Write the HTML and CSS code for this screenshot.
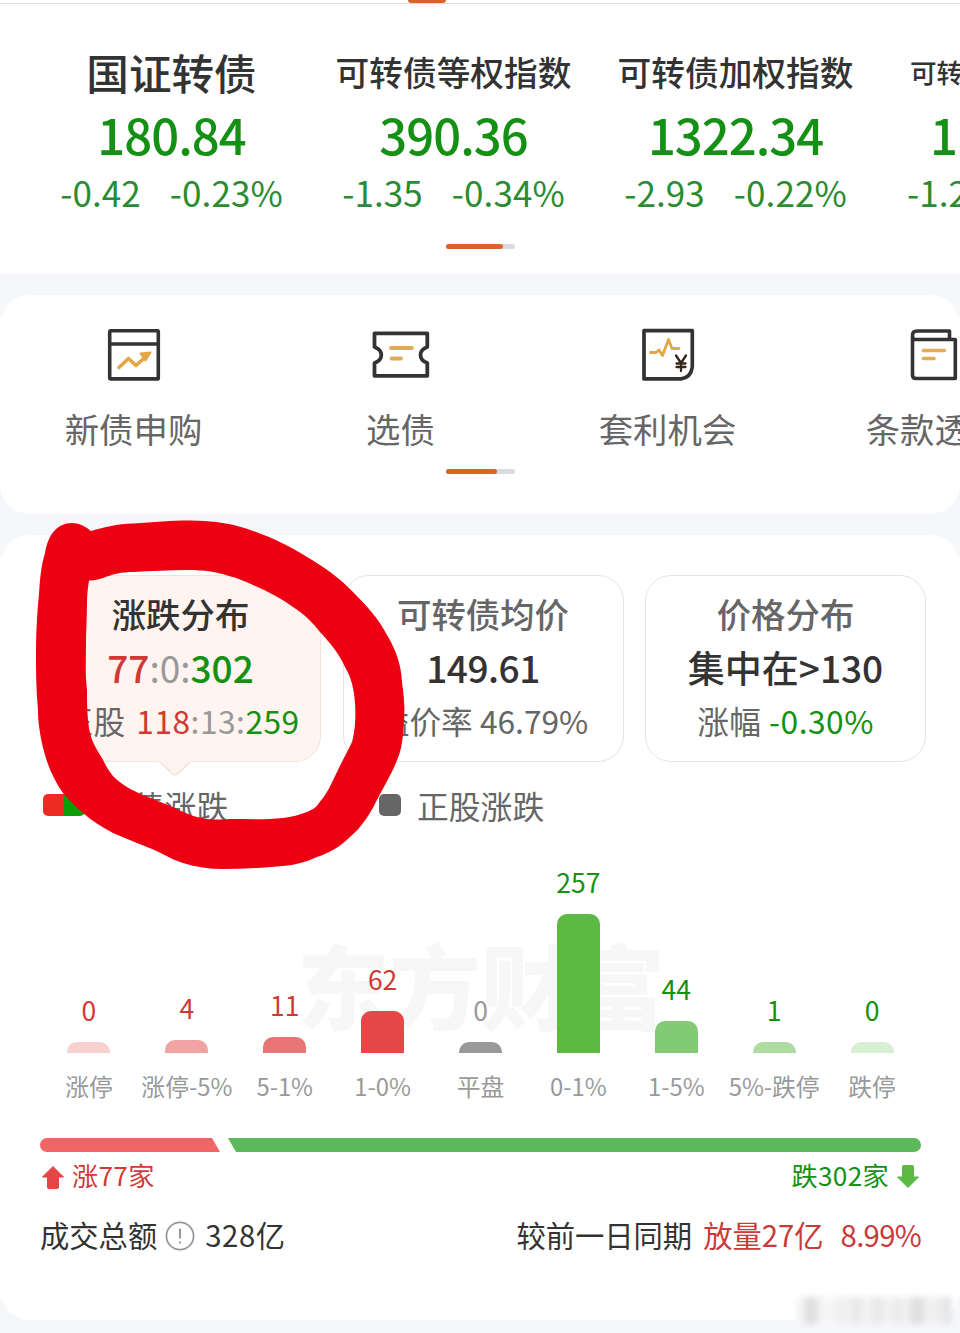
FILE: index.html
```html
<!DOCTYPE html>
<html lang="zh-CN">
<head>
<meta charset="utf-8">
<title>可转债</title>
<link rel="stylesheet" href="styles.css">
</head>
<body>
<div class="screen">
  <section class="indices">
    <div class="tab-line"><span class="tab-mark"></span></div>
    <div class="index-row">
      <div class="index"><h2 class="name name-lg">国证转债</h2><p class="value">180.84</p><p class="change"><span>-0.42</span><span>-0.23%</span></p></div>
      <div class="index"><h2 class="name">可转债等权指数</h2><p class="value">390.36</p><p class="change"><span>-1.35</span><span>-0.34%</span></p></div>
      <div class="index"><h2 class="name">可转债加权指数</h2><p class="value">1322.34</p><p class="change"><span>-2.93</span><span>-0.22%</span></p></div>
      <div class="index index-cut"><h2 class="name name-sm">可转债</h2><p class="value">1</p><p class="change"><span>-1.2</span></p></div>
    </div>
    <div class="pager"><span class="pager-on pager-a"></span></div>
  </section>

  <section class="card tools">
    <div class="tool-row">
      <div class="tool">
        <svg class="icon" viewBox="0 0 60 60" fill="none" stroke-linejoin="round" stroke-linecap="round"><g stroke="#333" stroke-width="3.6"><rect x="5.7" y="5.7" width="48.6" height="48.2" rx="1"/><path d="M6 19H54"/></g><path d="M15 42.500L24.500 33.500L32 40.500L43 30.500" stroke="#e3a545" stroke-width="3.6"/><path d="M36.500 28.500L46.500 27.500L41.500 35.500Z" fill="#e3a545" stroke="#e3a545" stroke-width="2"/></svg>
        <span class="tool-name">新债申购</span>
      </div>
      <div class="tool">
        <svg class="icon" viewBox="0 0 60 60" fill="none" stroke-linejoin="round" stroke-linecap="round"><path d="M3.500 8.300H56.300V22Q49.500 24.500 49.500 30T56.300 38V50.800H3.500V38Q10.300 35.500 10.300 30T3.500 22Z" stroke="#333" stroke-width="3.800"/><path d="M20 23H41M20.500 33.500H30" stroke="#e0ac55" stroke-width="3.800"/></svg>
        <span class="tool-name">选债</span>
      </div>
      <div class="tool">
        <svg class="icon" viewBox="0 0 60 60" fill="none" stroke-linejoin="round" stroke-linecap="round"><path d="M6 5.700H54.300V42Q53 52.500 43 53.900H6Z" stroke="#333" stroke-width="3.700"/><path d="M12.500 27.500H18L21 25L24.500 30.500L30.500 14.500L34 23.500H41" stroke="#e3a545" stroke-width="2.800"/><path d="M38 30.500L43 38L48 30.500M43 38V46M38.500 38.500H47.500M38.500 42H47.500" stroke="#33261a" stroke-width="2.300"/></svg>
        <span class="tool-name">套利机会</span>
      </div>
      <div class="tool">
        <svg class="icon" viewBox="0 0 60 60" fill="none" stroke-linejoin="round" stroke-linecap="round"><path d="M7.500 10.500Q7.500 6 12 6H44.500V14M10.500 14.500H50.300V53.500H11Q7.500 53.500 7.500 50V10.500Q7.500 14.500 10.500 14.500" stroke="#333" stroke-width="3.600"/><path d="M18.500 25.500H39.500M18.500 33.500H29" stroke="#e0ac55" stroke-width="3.600"/></svg>
        <span class="tool-name">条款透视</span>
      </div>
    </div>
    <div class="pager"><span class="pager-on pager-b"></span></div>
  </section>

  <section class="card stats">
    <div class="panels">
      <div class="panel active">
        <h3 class="panel-title">涨跌分布</h3>
        <p class="panel-value"><span class="up">77</span><span class="flat">:0:</span><span class="down">302</span></p>
        <p class="panel-note wide">正股 <span class="up">118</span><span class="flat">:13:</span><span class="down">259</span></p>
        <svg class="pointer" viewBox="0 0 38 18"><path d="M2 0L16 13.500Q19 16 22 13.500L36 0" fill="#fff4ef" stroke="#f5e2da" stroke-width="1.500"/><path d="M0 0H38" stroke="#fff4ef" stroke-width="3"/></svg>
      </div>
      <div class="panel">
        <h3 class="panel-title">可转债均价</h3>
        <p class="panel-value tight">149.61</p>
        <p class="panel-note">溢价率 46.79%</p>
      </div>
      <div class="panel">
        <h3 class="panel-title">价格分布</h3>
        <p class="panel-value">集中在&gt;130</p>
        <p class="panel-note wide">涨幅 <span class="down">-0.30%</span></p>
      </div>
    </div>

    <div class="legend">
      <div class="legend-item"><i class="swatch duo"></i>转债涨跌</div>
      <div class="legend-item"><i class="swatch"></i>正股涨跌</div>
    </div>

    <div class="chart">
      <div class="brand">东方财富</div>
      <div class="col up"><b>0</b><i class="bar r1" style="height:11px"></i><span>涨停</span></div>
      <div class="col up"><b>4</b><i class="bar r2" style="height:13px"></i><span>涨停-5%</span></div>
      <div class="col up"><b>11</b><i class="bar r3" style="height:16px"></i><span>5-1%</span></div>
      <div class="col up"><b>62</b><i class="bar r4" style="height:42px"></i><span>1-0%</span></div>
      <div class="col flat"><b>0</b><i class="bar n0" style="height:11px"></i><span>平盘</span></div>
      <div class="col down"><b>257</b><i class="bar g4" style="height:139px"></i><span>0-1%</span></div>
      <div class="col down"><b>44</b><i class="bar g3" style="height:32px"></i><span>1-5%</span></div>
      <div class="col down"><b>1</b><i class="bar g2" style="height:11px"></i><span>5%-跌停</span></div>
      <div class="col down"><b>0</b><i class="bar g1" style="height:11px"></i><span>跌停</span></div>
    </div>

    <div class="ratio"><i class="ratio-up"></i><i class="ratio-down"></i></div>
    <div class="counts">
      <span class="count up"><svg class="arrow" viewBox="0 0 24 24"><path d="M12 1.500L22.500 12H17.500V22.500Q17.500 23.500 16.500 23.500H7.500Q6.500 23.500 6.500 22.500V12H1.500Z" fill="#e64545" stroke="#e64545" stroke-linejoin="round"/></svg>涨77家</span>
      <span class="count down">跌302家<svg class="arrow" viewBox="0 0 24 24"><path d="M12 22.500L22.500 12H17.500V1.500Q17.500 .5 16.500 .5H7.500Q6.500 .5 6.500 1.500V12H1.500Z" fill="#5bb944" stroke="#5bb944" stroke-linejoin="round"/></svg></span>
    </div>
    <div class="turnover">
      <span class="total">成交总额<svg class="info" viewBox="0 0 30 30"><circle cx="15" cy="15" r="13.600" fill="none" stroke="#999" stroke-width="1.800"/><path d="M15 7.500V17.500M15 20.500V22.500" stroke="#999" stroke-width="2"/></svg><span class="sum">328亿</span></span>
      <span class="compare">较前一日同期<em>放量27亿</em><em class="pct">8.99%</em></span>
    </div>
  </section>

  <svg class="marker" viewBox="0 0 420 360"><path fill="#ee0013" fill-rule="evenodd" d="M45 43C48 25 57 13 72 13C80 13 86 17 91 21C105 17 117 14 133 13.500C155 12 170 10.500 190 10.500C215 10.500 235 14 253 21C273 28 291 37 307 47C324 57 340 68 353 82C367 96 378 108 387 125C396 140 401 154 402 172C404 186 405 198 404 212C403 222 403 234 399 245C393 262 385 274 377 290C370 304 362 317 350 327C340 337 329 343 317 347C306 352 295 355 283 356C262 358 243 359 223 359C209 359 196 357 183 353C170 349 159 341 147 337C135 332 124 328 113 323C102 317 92 311 83 303C75 296 69 290 63 283C53 269 46 252 42 233C39 218 38 210 38 200C36 180 36 162 36 143C36 122 37 104 39 84C40 69 41 56 45 43ZM89 70.500C95 71 99 69 103 68C113 64 122 62 133 62C152 61 169 60 187 60C205 60 217 62 229 66C238 68 246 72 253 75C267 81 281 88 293 97C304 104 313 113 320 122C330 133 339 143 345 157C352 169 354 180 355 193C356 207 355 222 352 232C347 243 341 253 336 264C331 275 326 285 319 293C315 299 311 300 307 302C299 305 292 307 283 308C265 310 248 309 230 309C218 310 207 310 197 307C185 304 175 297 163 293C156 290 150 288 143 285C131 280 121 274 113 266C108 260 105 254 102 248C97 240 92 232 90 223C87 208 87 194 87 180C85 164 86 149 86 133C86 119 87 106 87 93C87 84 88 77 89 70.500Z"/></svg>
  <div class="smudge"></div>
</div>
</body>
</html>
```
FILE: styles.css
```css
* { box-sizing: border-box; }
body {
  margin: 0;
  background: #f6f7fb;
  font-family: "Noto Sans CJK SC", "Noto Sans", sans-serif;
  color: #333;
}
h2, h3, p { margin: 0; font-weight: 400; }
i, em, b { font-style: normal; font-weight: 400; }
.up { color: #d03a35; }
.down { color: #149114; }
.flat { color: #999; }

.screen {
  position: relative;
  width: 960px;
  height: 1333px;
  overflow: hidden;
  display: flex;
  flex-direction: column;
  gap: 21px;
}

/* index strip */
.indices { height: 274px; background: #fff; overflow: hidden; }
.tab-line { height: 4px; border-bottom: 1px solid #ddd; padding-left: 408px; }
.tab-mark { display: block; width: 38px; height: 3px; background: #d8642a; border-radius: 0 0 3px 3px; }
.index-row { display: flex; padding: 40px 0 0 30.5px; height: 240px; }
.index { flex: 0 0 282px; text-align: center; white-space: nowrap; }
.name { height: 60px; line-height: 56px; font-size: 33.7px; font-weight: 500; }
.name-lg { font-size: 42.6px; }
.name-sm { font-size: 26.6px; }
.value { height: 63px; line-height: 60px; font-size: 49px; font-weight: 500; color: #149114; letter-spacing: -1px; }
.change { display: flex; justify-content: center; gap: 29px; line-height: 50px; font-size: 35px; color: #2a8c30; letter-spacing: .1px; }
.index-cut { text-align: left; padding-left: 33.5px; }
.index-cut .value { padding-left: 20px; }
.index-cut .change { justify-content: flex-start; margin-left: -3px; }
.pager { width: 69px; height: 5px; margin: 0 auto; border-radius: 3px; background: #d9dbdf; position: relative; left: .5px; }
.pager-on { display: block; height: 5px; border-radius: 3px; background: #d8642a; }
.pager-a { width: 57px; }
.pager-b { width: 51px; }

/* shortcuts */
.card { background: #fff; border-radius: 30px; }
.tools { height: 219px; overflow: hidden; }
.tool-row { display: flex; padding-top: 30px; height: 174px; }
.tool { flex: 0 0 267px; display: flex; flex-direction: column; align-items: center; }
.icon { width: 60px; height: 60px; }
.tool-name { margin-top: 18px; line-height: 50px; font-size: 34.4px; color: #666; }

/* statistics */
.stats { height: 785px; padding: 40px 34px 0 40px; }
.panels { display: flex; gap: 21.500px; }
.panel {
  position: relative;
  width: 281px;
  height: 187px;
  border: 1.5px solid #e5e5e5;
  border-radius: 26px;
  text-align: center;
  white-space: nowrap;
  padding-top: 11px;
}
.active { background: #fff4ef; border-color: #f5e2da; }
.panel-title { height: 52px; line-height: 52px; font-size: 34.4px; font-weight: 500; color: #666; }
.active .panel-title { color: #333; }
.panel-value { height: 56px; line-height: 56px; font-size: 37px; font-weight: 500; }
.panel-value .flat { font-weight: 400; }
.tight { letter-spacing: -.5px; }
.panel-note { height: 50px; line-height: 50px; font-size: 31.7px; color: #666; }
.wide { letter-spacing: .5px; }
.active .panel-note { word-spacing: 3px; }
.pointer { position: absolute; left: 115px; top: 184px; width: 38px; height: 18px; }

.legend { display: flex; height: 44px; margin-top: 21px; padding-left: 3px; }
.legend-item { display: flex; align-items: center; gap: 16px; width: 336px; line-height: 44px; font-size: 31.8px; color: #666; }
.swatch { width: 22px; height: 22px; border-radius: 5px; background: #666; }
.duo { width: 42px; background: linear-gradient(90deg, #ee2a24 50%, #0a9e08 50%); }

.chart { position: relative; display: flex; width: 881px; height: 278px; }
.brand {
  position: absolute;
  left: 257px;
  top: 91px;
  line-height: 130px;
  font-size: 92px;
  font-weight: 900;
  color: #f7f7f7;
}
.col { position: relative; flex: 1 1 0; display: flex; flex-direction: column; justify-content: flex-end; align-items: center; white-space: nowrap; }
.col b { line-height: 38px; margin-bottom: 13px; font-size: 26.5px; }
.col span { margin-top: 14px; line-height: 38px; font-size: 23.8px; color: #999; }
.bar { flex: none; width: 43px; border-radius: 10px 10px 0 0; }
.r1 { background: #f8d0cf; }
.r2 { background: #efa3a3; }
.r3 { background: #e87674; }
.r4 { background: #e64848; }
.n0 { background: #999; }
.g4 { background: #5bb944; }
.g3 { background: #82ca74; }
.g2 { background: #addba2; }
.g1 { background: #d7efd3; }

.ratio { display: flex; gap: 8px; width: 881px; height: 14px; margin-top: 33px; }
.ratio-up { width: 180px; background: #f26566; border-radius: 7px 0 0 7px; clip-path: polygon(0 0, 172px 0, 100% 100%, 0 100%); }
.ratio-down { flex: 1; background: #5bb95b; border-radius: 0 7px 7px 0; clip-path: polygon(0 0, 100% 0, 100% 100%, 8px 100%); }
.counts { display: flex; justify-content: space-between; width: 881px; height: 46px; line-height: 46px; font-size: 26.2px; letter-spacing: .3px; }
.count { display: flex; align-items: center; }
.arrow { width: 24px; height: 24px; margin: 4px 7px 0 1px; }
.count.down .arrow { margin: 3px 1px 0 7px; }
.turnover { display: flex; justify-content: space-between; width: 881px; height: 60px; line-height: 60px; margin-top: 6px; font-size: 29.3px; }
.total, .compare { display: flex; align-items: center; white-space: nowrap; }
.info { width: 30px; height: 30px; margin: 3px 10px 0 8px; }
.sum { letter-spacing: .6px; }
.compare em { margin-left: 11px; color: #c93a3a; }
.compare .pct { margin-left: 17px; letter-spacing: -.7px; }

/* freehand annotation above the panels */
.marker { position: absolute; left: 0; top: 510px; width: 420px; height: 360px; }
.smudge {
  position: absolute;
  left: 796px;
  top: 1297px;
  width: 155px;
  height: 27px;
  filter: blur(3px);
  background: linear-gradient(90deg, #f5f5f5 0 4%, #dededf 7% 12%, #f6f6f7 16% 24%, #ededee 28%, #f4f4f5 33%, #e8e8e9 38% 41%, #f5f5f6 45%, #e8e8e9 52% 54%, #f4f4f5 59%, #e9e9ea 66%, #f4f4f5 71%, #dededf 76% 80%, #f2f2f3 85%, #eaeaeb 96%, #dadadb);
}
```
